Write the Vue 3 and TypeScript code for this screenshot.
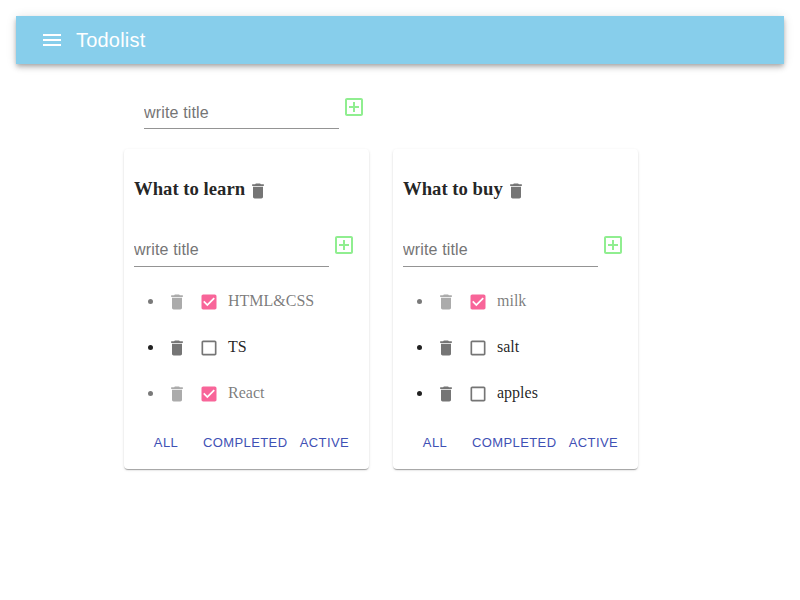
<script setup lang="ts">
import { computed, ref } from 'vue'

type Filter = 'all' | 'completed' | 'active'

interface Task {
  id: number
  title: string
  isDone: boolean
}

interface TodoList {
  id: number
  title: string
  filter: Filter
  draft: string
  tasks: Task[]
}

const TRASH = 'M6 19c0 1.1.9 2 2 2h8c1.1 0 2-.9 2-2V7H6v12zM19 4h-3.5l-1-1h-5l-1 1H5v2h14V4z'
const ADD_BOX = 'M19 3H5c-1.11 0-2 .9-2 2v14c0 1.1.89 2 2 2h14c1.1 0 2-.9 2-2V5c0-1.1-.9-2-2-2zm0 16H5V5h14v14zm-8-2h2v-4h4v-2h-4V7h-2v4H7v2h4z'
const BOX_EMPTY = 'M19 5v14H5V5h14m0-2H5c-1.1 0-2 .9-2 2v14c0 1.1.9 2 2 2h14c1.1 0 2-.9 2-2V5c0-1.1-.9-2-2-2z'
const BOX_CHECKED = 'M19 3H5c-1.11 0-2 .9-2 2v14c0 1.1.89 2 2 2h14c1.11 0 2-.9 2-2V5c0-1.1-.89-2-2-2zm-9 14l-5-5 1.41-1.41L10 14.17l7.59-7.59L19 8l-9 9z'

const filters: Filter[] = ['all', 'completed', 'active']
const newTitle = ref('')
let nextId = 100

const lists = ref<TodoList[]>([
  {
    id: 1,
    title: 'What to learn',
    filter: 'all',
    draft: '',
    tasks: [
      { id: 11, title: 'HTML&CSS', isDone: true },
      { id: 12, title: 'TS', isDone: false },
      { id: 13, title: 'React', isDone: true },
    ],
  },
  {
    id: 2,
    title: 'What to buy',
    filter: 'all',
    draft: '',
    tasks: [
      { id: 21, title: 'milk', isDone: true },
      { id: 22, title: 'salt', isDone: false },
      { id: 23, title: 'apples', isDone: false },
    ],
  },
])

const cards = computed(() =>
  lists.value.map((list) => ({
    list,
    tasks: list.tasks.filter((t) => list.filter === 'all' || t.isDone === (list.filter === 'completed')),
  })),
)

function addList() {
  const title = newTitle.value.trim()
  if (!title) return
  lists.value.push({ id: nextId++, title, filter: 'all', draft: '', tasks: [] })
  newTitle.value = ''
}

function removeList(id: number) {
  lists.value = lists.value.filter((l) => l.id !== id)
}

function addTask(list: TodoList) {
  const title = list.draft.trim()
  if (!title) return
  list.tasks.push({ id: nextId++, title, isDone: false })
  list.draft = ''
}

function removeTask(list: TodoList, id: number) {
  list.tasks = list.tasks.filter((t) => t.id !== id)
}
</script>

<template>
  <header class="app-bar">
    <button class="icon-button" type="button" aria-label="Menu">
      <svg class="icon" viewBox="0 0 24 24"><path d="M3 18h18v-2H3v2zm0-5h18v-2H3v2zm0-7v2h18V6H3z" /></svg>
    </button>
    <h1 class="brand">Todolist</h1>
  </header>

  <main class="content">
    <form class="add-form new-list" @submit.prevent="addList">
      <input v-model="newTitle" class="text-field" type="text" placeholder="write title" aria-label="New list title" />
      <button class="icon-button add" type="submit" aria-label="Add list">
        <svg class="icon" viewBox="0 0 24 24"><path :d="ADD_BOX" /></svg>
      </button>
    </form>

    <div class="lists">
      <section v-for="{ list, tasks } in cards" :key="list.id" class="card">
        <h3 class="card-title">
          <span>{{ list.title }}</span>
          <button class="icon-button" type="button" aria-label="Delete list" @click="removeList(list.id)">
            <svg class="icon small" viewBox="0 0 24 24"><path :d="TRASH" /></svg>
          </button>
        </h3>

        <form class="add-form" @submit.prevent="addTask(list)">
          <input v-model="list.draft" class="text-field" type="text" placeholder="write title" aria-label="New task title" />
          <button class="icon-button add" type="submit" aria-label="Add task">
            <svg class="icon" viewBox="0 0 24 24"><path :d="ADD_BOX" /></svg>
          </button>
        </form>

        <ul class="tasks">
          <li v-for="task in tasks" :key="task.id" class="task" :class="{ done: task.isDone }">
            <button class="icon-button" type="button" aria-label="Delete task" @click="removeTask(list, task.id)">
              <svg class="icon small" viewBox="0 0 24 24"><path :d="TRASH" /></svg>
            </button>
            <label class="task-label">
              <span class="checkbox" :class="{ checked: task.isDone }">
                <input v-model="task.isDone" type="checkbox" />
                <svg class="icon small" viewBox="0 0 24 24"><path :d="task.isDone ? BOX_CHECKED : BOX_EMPTY" /></svg>
              </span>
              <span class="task-title">{{ task.title }}</span>
            </label>
          </li>
        </ul>

        <div class="filters">
          <button v-for="f in filters" :key="f" class="filter" type="button" @click="list.filter = f">{{ f }}</button>
        </div>
      </section>
    </div>
  </main>
</template>

<style>
body {
  margin: 0;
  background: #fff;
}
</style>

<style scoped>
.app-bar {
  display: flex;
  align-items: center;
  gap: 9px;
  height: 48px;
  margin: 16px 16px 0;
  padding: 0 21px;
  box-sizing: border-box;
  background: skyblue;
  color: #fff;
  box-shadow:
    0 2px 4px -1px rgba(0, 0, 0, 0.2),
    0 4px 5px 0 rgba(0, 0, 0, 0.14),
    0 1px 10px 0 rgba(0, 0, 0, 0.12);
}

.brand {
  margin: 0;
  font: 400 20px/32px "Liberation Sans", Arial, sans-serif;
  letter-spacing: 0.01em;
}

.icon-button {
  display: inline-flex;
  flex: none;
  padding: 3px;
  border: 0;
  background: none;
  color: inherit;
  cursor: pointer;
}

.icon {
  display: block;
  width: 24px;
  height: 24px;
  fill: currentColor;
}

.icon.small {
  width: 20px;
  height: 20px;
}

.content {
  padding: 28px 100px 24px 124px;
  color: rgba(0, 0, 0, 0.87);
  font: 16px/18px "Liberation Serif", "Times New Roman", serif;
}

.add-form {
  display: flex;
  align-items: flex-start;
}

.new-list {
  margin: 0 0 20px 20px;
}

.text-field {
  width: 195px;
  height: 32px;
  margin: 5px 0 0;
  padding: 6px 0;
  box-sizing: border-box;
  border: 0;
  border-bottom: 1px solid rgba(0, 0, 0, 0.42);
  border-radius: 0;
  outline: 0;
  background: none;
  color: inherit;
  font: 16px/19px "Liberation Sans", Arial, sans-serif;
  letter-spacing: 0.01em;
}

.text-field::placeholder {
  color: #757575;
}

.add {
  color: lightgreen;
}

.lists {
  display: flex;
  flex-wrap: wrap;
  gap: 24px;
}

.card {
  width: 245px;
  padding: 10px;
  box-sizing: border-box;
  border-radius: 4px;
  box-shadow:
    0 2px 1px -1px rgba(0, 0, 0, 0.2),
    0 1px 1px 0 rgba(0, 0, 0, 0.14),
    0 1px 3px 0 rgba(0, 0, 0, 0.12);
}

.card-title {
  margin: 17px 0 26px;
  font-size: 1.17em;
  line-height: 26px;
}

.card-title .icon-button {
  vertical-align: middle;
  color: #757575;
}

.card .add-form {
  margin-bottom: 12px;
}

.tasks {
  margin: 0;
  padding: 0;
  list-style: none;
}

.task {
  display: flex;
  align-items: center;
  height: 46px;
  padding-left: 14px;
}

.task::before {
  content: "";
  width: 5px;
  height: 5px;
  margin-right: 11px;
  border-radius: 50%;
  background: currentColor;
}

.task.done {
  opacity: 0.6;
}

.task .icon-button {
  color: #757575;
}

.task-label {
  display: flex;
  align-items: center;
  cursor: pointer;
}

.task-title {
  padding-bottom: 2px;
}

.checkbox {
  position: relative;
  padding: 9px;
  color: #757575;
}

.checkbox.checked {
  color: #f50057;
}

.checkbox input {
  position: absolute;
  inset: 0;
  width: 100%;
  height: 100%;
  margin: 0;
  opacity: 0;
  cursor: pointer;
}

.filters {
  display: flex;
  margin-top: 10px;
}

.filter {
  min-width: 64px;
  height: 32px;
  padding: 4px 5px;
  border: 0;
  border-radius: 4px;
  background: none;
  color: #3f51b5;
  font: 13px/23px "Liberation Sans", Arial, sans-serif;
  letter-spacing: 0.03em;
  text-transform: uppercase;
  cursor: pointer;
}
</style>
